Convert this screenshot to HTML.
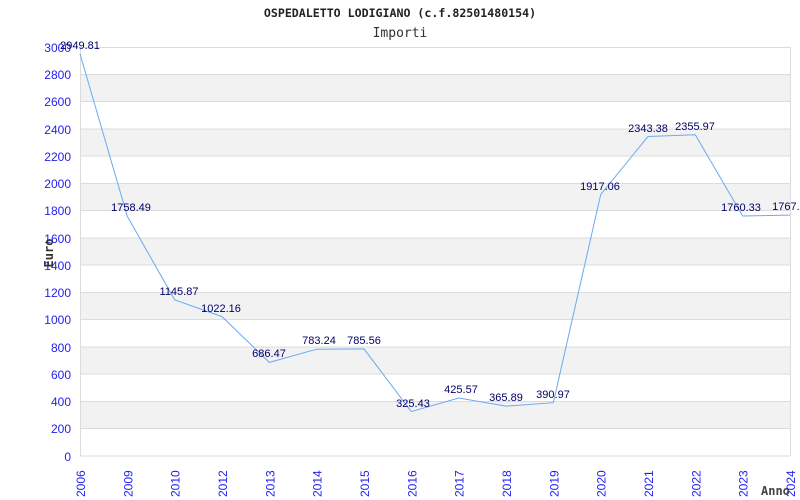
<!DOCTYPE html>
<html><head><meta charset="utf-8"><style>
html,body{margin:0;padding:0;background:#fff;width:800px;height:500px;overflow:hidden}
</style></head><body>
<svg width="800" height="500" xmlns="http://www.w3.org/2000/svg" font-family="Liberation Sans, DejaVu Sans, sans-serif">
<rect width="800" height="500" fill="#fff"/>
<text x="400" y="17" text-anchor="middle" font-family="DejaVu Sans Mono, monospace" font-weight="bold" font-size="11.6" fill="#222">OSPEDALETTO LODIGIANO (c.f.82501480154)</text>
<text x="400" y="37" text-anchor="middle" font-family="DejaVu Sans Mono, monospace" font-size="13" fill="#333">Importi</text>
<g fill="#f2f2f2">
<rect x="80" y="74.3" width="710" height="27.3"/>
<rect x="80" y="128.8" width="710" height="27.3"/>
<rect x="80" y="183.3" width="710" height="27.3"/>
<rect x="80" y="237.9" width="710" height="27.3"/>
<rect x="80" y="292.4" width="710" height="27.3"/>
<rect x="80" y="347" width="710" height="27.3"/>
<rect x="80" y="401.5" width="710" height="27.3"/>
</g>
<g stroke="#dcdcdc" stroke-width="1">
<line x1="80" y1="47.5" x2="790" y2="47.5"/>
<line x1="80" y1="74.5" x2="790" y2="74.5"/>
<line x1="80" y1="101.5" x2="790" y2="101.5"/>
<line x1="80" y1="129" x2="790" y2="129"/>
<line x1="80" y1="156" x2="790" y2="156"/>
<line x1="80" y1="183.5" x2="790" y2="183.5"/>
<line x1="80" y1="210.5" x2="790" y2="210.5"/>
<line x1="80" y1="238" x2="790" y2="238"/>
<line x1="80" y1="265" x2="790" y2="265"/>
<line x1="80" y1="292.5" x2="790" y2="292.5"/>
<line x1="80" y1="319.5" x2="790" y2="319.5"/>
<line x1="80" y1="347" x2="790" y2="347"/>
<line x1="80" y1="374" x2="790" y2="374"/>
<line x1="80" y1="401.5" x2="790" y2="401.5"/>
<line x1="80" y1="428.5" x2="790" y2="428.5"/>
<line x1="80" y1="456" x2="790" y2="456"/>
<line x1="80.5" y1="47" x2="80.5" y2="456"/>
<line x1="790.5" y1="47" x2="790.5" y2="456"/>
</g>
<g fill="#2222ee" font-size="12" text-anchor="end">
<text x="71" y="52">3000</text><text x="71" y="79">2800</text><text x="71" y="106">2600</text>
<text x="71" y="134">2400</text><text x="71" y="161">2200</text><text x="71" y="188">2000</text>
<text x="71" y="215">1800</text><text x="71" y="243">1600</text><text x="71" y="270">1400</text>
<text x="71" y="297">1200</text><text x="71" y="324">1000</text><text x="71" y="352">800</text>
<text x="71" y="379">600</text><text x="71" y="406">400</text><text x="71" y="433">200</text>
<text x="71" y="461">0</text>
</g>
<text transform="translate(53,253) rotate(-90)" text-anchor="middle" font-family="DejaVu Sans Mono, monospace" font-weight="bold" font-size="12" fill="#333">Euro</text>
<g fill="#2222ee" font-size="12">
<text transform="translate(85,497) rotate(-90)">2006</text>
<text transform="translate(132.3,497) rotate(-90)">2009</text>
<text transform="translate(179.7,497) rotate(-90)">2010</text>
<text transform="translate(227,497) rotate(-90)">2012</text>
<text transform="translate(274.3,497) rotate(-90)">2013</text>
<text transform="translate(321.7,497) rotate(-90)">2014</text>
<text transform="translate(369,497) rotate(-90)">2015</text>
<text transform="translate(416.3,497) rotate(-90)">2016</text>
<text transform="translate(463.7,497) rotate(-90)">2017</text>
<text transform="translate(511,497) rotate(-90)">2018</text>
<text transform="translate(558.3,497) rotate(-90)">2019</text>
<text transform="translate(605.7,497) rotate(-90)">2020</text>
<text transform="translate(653,497) rotate(-90)">2021</text>
<text transform="translate(700.3,497) rotate(-90)">2022</text>
<text transform="translate(747.7,497) rotate(-90)">2023</text>
<text transform="translate(795,497) rotate(-90)">2024</text>
</g>
<text x="761" y="495" font-family="DejaVu Sans Mono, monospace" font-weight="bold" font-size="12" fill="#444">Anno</text>
<polyline fill="none" stroke="#6aaaf0" stroke-width="1" points="80,53.9 127.3,216.3 174.7,299.8 222,316.6 269.3,362.4 316.7,349.2 364,348.9 411.3,411.6 458.7,398 506,406.1 553.3,402.7 600.7,194.6 648,136.5 695.3,134.8 742.7,216 790,215.1"/>
<g fill="#000066" font-size="11" text-anchor="middle">
<text x="80" y="49">2949.81</text>
<text x="131" y="211">1758.49</text>
<text x="179" y="295">1145.87</text>
<text x="221" y="312">1022.16</text>
<text x="269" y="357">686.47</text>
<text x="319" y="344">783.24</text>
<text x="364" y="344">785.56</text>
<text x="413" y="407">325.43</text>
<text x="461" y="393">425.57</text>
<text x="506" y="401">365.89</text>
<text x="553" y="398">390.97</text>
<text x="600" y="190">1917.06</text>
<text x="648" y="132">2343.38</text>
<text x="695" y="130">2355.97</text>
<text x="741" y="211">1760.33</text>
<text x="789" y="210">1767.0</text>
</g>
</svg>
</body></html>
